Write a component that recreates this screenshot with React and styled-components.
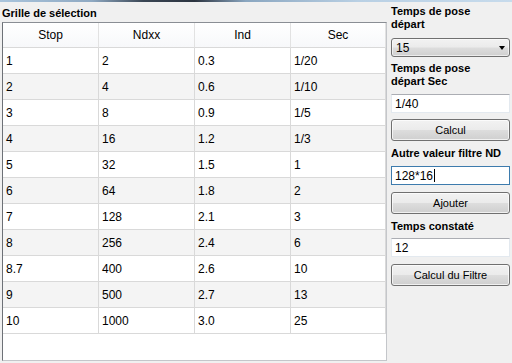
import React from 'react';
import styled, { createGlobalStyle } from 'styled-components';

const theme = {
  windowBg: '#f0f0f0',
  gridLine: '#d9d9d9',
  headerLine: '#e2e2e2',
  altRow: '#f4f4f4',
  boxBorder: '#828790',
  btnBorder: '#707070',
  inputBorder: '#abadb3',
  focusBorder: '#3d7bad',
  text: '#000'
};

const GlobalStyle = createGlobalStyle`
  html, body {
    margin: 0;
    padding: 0;
    background: ${theme.windowBg};
  }
  body {
    width: 512px;
    height: 363px;
    overflow: hidden;
    font-family: "Liberation Sans", Arial, sans-serif;
    color: ${theme.text};
  }
`;

const Window = styled.div`
  width: 512px;
  height: 363px;
  overflow: hidden;
  background: ${theme.windowBg};
  display: flex;
  flex-direction: column;
`;

// bottom of the window frame that shows above the form
const FrameEdge = styled.div`
  height: 2px;
  flex: none;
  background: linear-gradient(90deg, #a9c4dc 0%, #8fa9c2 18%, #3a4654 28%, #2c3440 38%, #8aa6c0 48%, #b9d0e4 70%, #c7dbec 100%);
`;

const Main = styled.div`
  display: flex;
  flex: 1;
  min-height: 0;
`;

const GridSection = styled.section`
  width: 388px;
  flex: none;
  padding: 2px 0 0 2px;
  box-sizing: border-box;
  display: flex;
  flex-direction: column;
`;

const BoldLabel = styled.div`
  font-size: 11px;
  font-weight: bold;
  line-height: 13px;
  white-space: ${p => (p.$nowrap ? 'nowrap' : 'normal')};
`;

const SectionTitle = styled(BoldLabel)`
  padding-top: 3px;
  height: 18px;
  box-sizing: border-box;
`;

const GridBox = styled.div`
  width: 385px;
  height: 339px;
  box-sizing: border-box;
  background: #fff;
  border: 1px solid ${theme.boxBorder};
  border-left-color: #6d7177;
  border-top-color: #8a8e94;
  border-right-color: #c4c6ca;
  border-bottom-color: #c4c6ca;
  overflow: hidden;
`;

const Grid = styled.div`
  display: grid;
  grid-template-columns: 96px 96px 96px 95px;
`;

const HeaderCell = styled.div`
  height: 25px;
  box-sizing: border-box;
  display: flex;
  align-items: center;
  justify-content: center;
  font-size: 12px;
  background: linear-gradient(#ffffff, #f7f8fa);
  border-right: 1px solid ${theme.headerLine};
  border-bottom: 1px solid ${theme.gridLine};
`;

const Cell = styled.div`
  height: 26px;
  box-sizing: border-box;
  display: flex;
  align-items: center;
  padding-left: 3px;
  font-size: 12px;
  background: ${p => (p.$alt ? theme.altRow : '#fff')};
  border-right: 1px solid ${theme.gridLine};
  border-bottom: 1px solid ${theme.gridLine};
`;

const SidePanel = styled.aside`
  width: 119px;
  flex: none;
  margin-left: 3px;
  padding-top: 2px;
  display: flex;
  flex-direction: column;
`;

const Field = styled.div`
  display: flex;
  flex-direction: column;
  gap: ${p => p.$gap || 6}px;
  margin-top: ${p => p.$top || 0}px;
`;

const winGradient = `linear-gradient(#f2f2f2 0%, #ebebeb 48%, #dddddd 52%, #cfcfcf 100%)`;

const Select = styled.div`
  height: 19px;
  box-sizing: border-box;
  border: 1px solid ${theme.btnBorder};
  border-radius: 3px;
  background: ${winGradient};
  box-shadow: inset 0 0 0 1px rgba(255, 255, 255, 0.6);
  display: flex;
  align-items: center;
  justify-content: space-between;
  padding: 0 4px 0 4px;
  font-size: 12px;
`;

const Arrow = styled.span`
  width: 0;
  height: 0;
  border-left: 3.5px solid transparent;
  border-right: 3.5px solid transparent;
  border-top: 4px solid #000;
`;

const TextBox = styled.div`
  height: 19px;
  box-sizing: border-box;
  background: #fff;
  border: 1px solid ${p => (p.$focus ? theme.focusBorder : '#e3e9ef')};
  border-top-color: ${p => (p.$focus ? theme.focusBorder : theme.inputBorder)};
  display: flex;
  align-items: center;
  padding-left: 3px;
  font-size: 12px;
`;

const Caret = styled.span`
  width: 1px;
  height: 13px;
  background: #000;
  margin-left: 1px;
`;

const Button = styled.button`
  height: 22px;
  width: 100%;
  box-sizing: border-box;
  border: 1px solid ${theme.btnBorder};
  border-radius: 3px;
  background: ${winGradient};
  box-shadow: inset 0 0 0 1px rgba(255, 255, 255, 0.7);
  font-family: "Liberation Sans", Arial, sans-serif;
  font-size: 11px;
  color: #000;
  padding: 0;
  margin-top: ${p => p.$top || 6}px;
`;

const rows = [
  ['1', '2', '0.3', '1/20'],
  ['2', '4', '0.6', '1/10'],
  ['3', '8', '0.9', '1/5'],
  ['4', '16', '1.2', '1/3'],
  ['5', '32', '1.5', '1'],
  ['6', '64', '1.8', '2'],
  ['7', '128', '2.1', '3'],
  ['8', '256', '2.4', '6'],
  ['8.7', '400', '2.6', '10'],
  ['9', '500', '2.7', '13'],
  ['10', '1000', '3.0', '25']
];

const headers = ['Stop', 'Ndxx', 'Ind', 'Sec'];

const App = () => {
  return (
    <Window>
      <GlobalStyle />
      <FrameEdge />
      <Main>
        <GridSection>
          <SectionTitle>Grille de sélection</SectionTitle>
          <GridBox>
            <Grid>
              {headers.map(h => (
                <HeaderCell key={h}>{h}</HeaderCell>
              ))}
              {rows.map((row, i) =>
                row.map((val, j) => (
                  <Cell key={i + '-' + j} $alt={i % 2 === 1}>{val}</Cell>
                ))
              )}
            </Grid>
          </GridBox>
        </GridSection>

        <SidePanel>
          <Field $gap={7} $top={1}>
            <BoldLabel>Temps de pose<br />départ</BoldLabel>
            <Select>
              <span>15</span>
              <Arrow />
            </Select>
          </Field>

          <Field $top={5}>
            <BoldLabel>Temps de pose<br />départ Sec</BoldLabel>
            <TextBox>1/40</TextBox>
          </Field>
          <Button>Calcul</Button>

          <Field $top={6}>
            <BoldLabel $nowrap>Autre valeur filtre ND</BoldLabel>
            <TextBox $focus>128*16<Caret /></TextBox>
          </Field>
          <Button $top={7}>Ajouter</Button>

          <Field $top={6} $gap={5}>
            <BoldLabel>Temps constaté</BoldLabel>
            <TextBox>12</TextBox>
          </Field>
          <Button $top={7}>Calcul du Filtre</Button>
        </SidePanel>
      </Main>
    </Window>
  );
};

export default App;
